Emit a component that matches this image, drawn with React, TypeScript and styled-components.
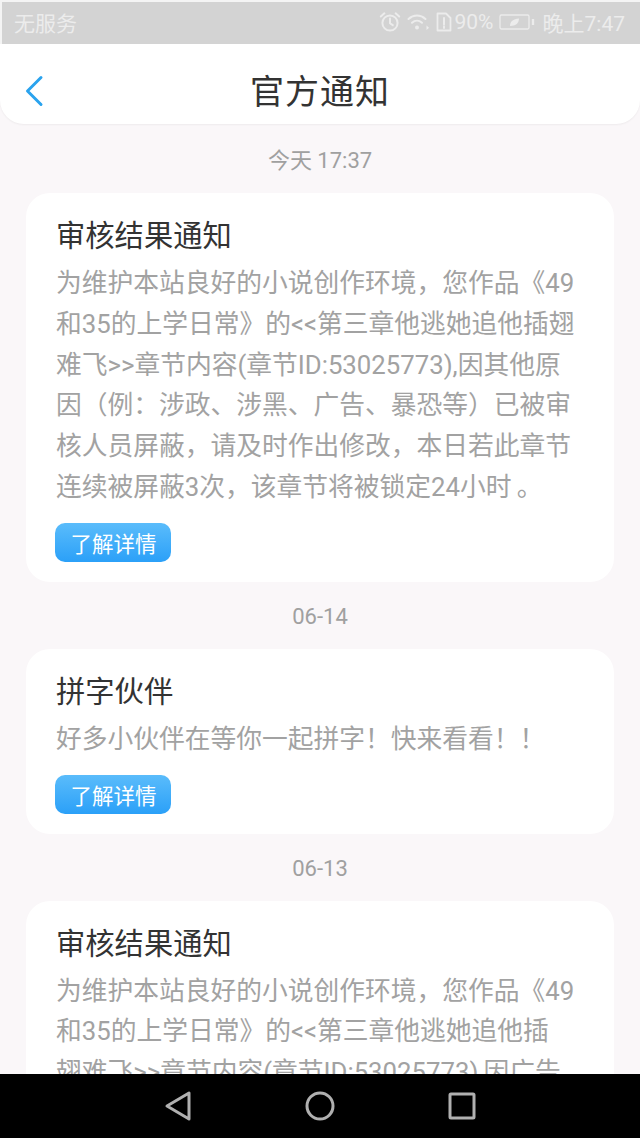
import React from 'react';
import styled, { createGlobalStyle } from 'styled-components';

const GlobalStyle = createGlobalStyle`
  html, body {
    margin: 0;
    padding: 0;
    background: #faf7f9;
  }
  body {
    font-family: 'Roboto', 'Noto Sans CJK SC', sans-serif;
  }
`;

const notices = [
  {
    time: '今天 17:37',
    title: '审核结果通知',
    lines: [
      '为维护本站良好的小说创作环境，您作品《49',
      '和35的上学日常》的<<第三章他逃她追他插翅',
      '难飞>>章节内容(章节ID:53025773),因其他原',
      '因（例：涉政、涉黑、广告、暴恐等）已被审',
      '核人员屏蔽，请及时作出修改，本日若此章节',
      '连续被屏蔽3次，该章节将被锁定24小时\u2009。',
    ],
  },
  {
    time: '06-14',
    title: '拼字伙伴',
    lines: ['好多小伙伴在等你一起拼字！快来看看！！'],
  },
  {
    time: '06-13',
    title: '审核结果通知',
    lines: [
      '为维护本站良好的小说创作环境，您作品《49',
      '和35的上学日常》的<<第三章他逃她追他插',
      '翅难飞>>章节内容(章节ID:53025773),因广告',
    ],
  },
];

const App = () => (
  <Root>
    <GlobalStyle />
    <StatusBar>
      <StatusText>无服务</StatusText>
      <StatusRight>
        <StatusIcon $left={0}>
          <svg width="22" height="22" viewBox="0 0 22 22" fill="none" stroke="#ececec" strokeWidth="2" strokeLinecap="round">
            <circle cx="11" cy="12" r="7.6" />
            <path d="M11 7.500v4.800l2.800 1.800M1.800 5.500l3.600-3.200M20.200 5.500l-3.600-3.200" />
          </svg>
        </StatusIcon>
        <StatusIcon $left={6}>
          <svg width="23" height="20" viewBox="0 0 23 20" fill="none" stroke="#ececec" strokeWidth="2" strokeLinecap="round">
            <path d="M1.500 7c5-4.600 12-4.600 17 0M5 10.800c3-2.800 7-2.800 10 0" />
            <circle cx="10" cy="15.500" r="2" fill="#ececec" stroke="none" />
            <path d="M19.500 13.500v4.500l2.500-2.200z" fill="#ececec" stroke="none" />
          </svg>
        </StatusIcon>
        <StatusIcon $left={6}>
          <svg width="16" height="20" viewBox="0 0 16 20" fill="none" stroke="#ececec" strokeWidth="1.800" strokeLinejoin="round">
            <path d="M1.500 1.500h8.500l4.500 4.500v12.500h-13z" />
            <path d="M8 6v6.500M8 14.500v1.500" strokeLinecap="round" strokeWidth="2" />
          </svg>
        </StatusIcon>
        <StatusText $left={3}>90%</StatusText>
        <StatusIcon $left={5}>
          <svg width="36" height="18" viewBox="0 0 36 18" fill="none" stroke="#ececec" strokeWidth="1.300">
            <rect x="1" y="2" width="29" height="14" rx="1.500" />
            <path d="M34 6v6" strokeWidth="2.400" />
            <path d="M11 13c0-4.500 3-7 9-7.500 0 4.500-3 7.500-9 7.500z" fill="#ececec" stroke="none" />
          </svg>
        </StatusIcon>
        <StatusText $left={8}>晚上7:47</StatusText>
      </StatusRight>
    </StatusBar>

    <Header>
      <BackButton>
        <svg width="20" height="32" viewBox="0 0 20 32" fill="none" stroke="#2aa3ee" strokeWidth="3" strokeLinecap="round" strokeLinejoin="round">
          <path d="M17 2.500L3.500 16 17 29.500" />
        </svg>
      </BackButton>
      <HeaderTitle>官方通知</HeaderTitle>
    </Header>

    <Feed>
      {notices.map((notice, index) => (
        <Section key={index}>
          <TimeLabel>{notice.time}</TimeLabel>
          <Card>
            <CardTitle>{notice.title}</CardTitle>
            <CardBody>
              {notice.lines.map((line) => (
                <BodyLine key={line}>{line}</BodyLine>
              ))}
            </CardBody>
            <DetailButton>了解详情</DetailButton>
          </Card>
        </Section>
      ))}
    </Feed>

    <NavBar>
      <svg width="28" height="32" viewBox="0 0 28 32" fill="none" stroke="#b0b0b0" strokeWidth="3" strokeLinejoin="round">
        <path d="M25 3v26L3 16z" />
      </svg>
      <svg width="30" height="30" viewBox="0 0 30 30" fill="none" stroke="#b0b0b0" strokeWidth="3">
        <circle cx="15" cy="15" r="13" />
      </svg>
      <svg width="28" height="28" viewBox="0 0 28 28" fill="none" stroke="#b0b0b0" strokeWidth="3" strokeLinejoin="round">
        <rect x="2" y="2" width="24" height="24" rx="1" />
      </svg>
    </NavBar>
  </Root>
);

export default App;

interface OffsetProps {
  $left?: number;
}

const Root = styled.div`
  width: 640px;
  height: 1138px;
  display: flex;
  flex-direction: column;
  overflow: hidden;
  background: #faf7f9;
`;

const StatusBar = styled.div`
  height: 44px;
  flex-shrink: 0;
  box-sizing: border-box;
  padding: 0 15px 2px 12px;
  background: #d3d3d3;
  border-left: 2px solid #f4f4f4;
  border-top: 2px solid #f4f4f4;
  display: flex;
  align-items: center;
  justify-content: space-between;
`;

const StatusRight = styled.div`
  display: flex;
  align-items: center;
`;

const StatusIcon = styled.span<OffsetProps>`
  display: flex;
  margin-left: ${({ $left }) => $left || 0}px;
`;

const StatusText = styled.span<OffsetProps>`
  margin-left: ${({ $left }) => $left || 0}px;
  font-size: 21px;
  color: #ececec;
  white-space: nowrap;
`;

const Header = styled.header`
  height: 80px;
  flex-shrink: 0;
  box-sizing: border-box;
  padding-top: 11px;
  display: flex;
  align-items: center;
  justify-content: center;
  position: relative;
  background: #ffffff;
  border-radius: 0 0 24px 24px;
  box-shadow: 0 1px 2px rgba(0, 0, 0, 0.05);
`;

const BackButton = styled.div`
  position: absolute;
  left: 24px;
  top: 31px;
  line-height: 0;
`;

const HeaderTitle = styled.h1`
  margin: 0;
  font-size: 34px;
  font-weight: 400;
  letter-spacing: 1px;
  color: #333333;
`;

const Feed = styled.main`
  flex: 1;
  min-height: 0;
  overflow: hidden;
  padding-top: 22px;
`;

const Section = styled.section`
  margin-bottom: 20px;
`;

const TimeLabel = styled.div`
  height: 30px;
  line-height: 30px;
  margin-bottom: 17px;
  text-align: center;
  font-size: 22px;
  color: #a0a0a0;
`;

const Card = styled.article`
  margin: 0 26px;
  padding: 22px 30px 20px 30px;
  background: #ffffff;
  border-radius: 24px;
`;

const CardTitle = styled.h2`
  margin: 0 0 6px 0;
  height: 42px;
  line-height: 42px;
  font-size: 29.3px;
  font-weight: 400;
  color: #333333;
`;

const CardBody = styled.div`
  margin-bottom: 15px;
`;

const BodyLine = styled.p`
  margin: 0;
  height: 40.8px;
  line-height: 40.8px;
  font-size: 25.75px;
  color: #a2a2a2;
  white-space: nowrap;
`;

const DetailButton = styled.button`
  display: block;
  width: 116px;
  height: 39px;
  margin-left: -1px;
  padding: 0 0 0 1px;
  border: 0;
  border-radius: 10px;
  background: linear-gradient(#5abcfb, #2ba0f8);
  color: #ffffff;
  font-family: inherit;
  font-size: 21.5px;
`;

const NavBar = styled.nav`
  height: 64px;
  flex-shrink: 0;
  background: #000000;
  display: flex;
  align-items: center;
  justify-content: space-between;
  padding: 0 164px;
`;
